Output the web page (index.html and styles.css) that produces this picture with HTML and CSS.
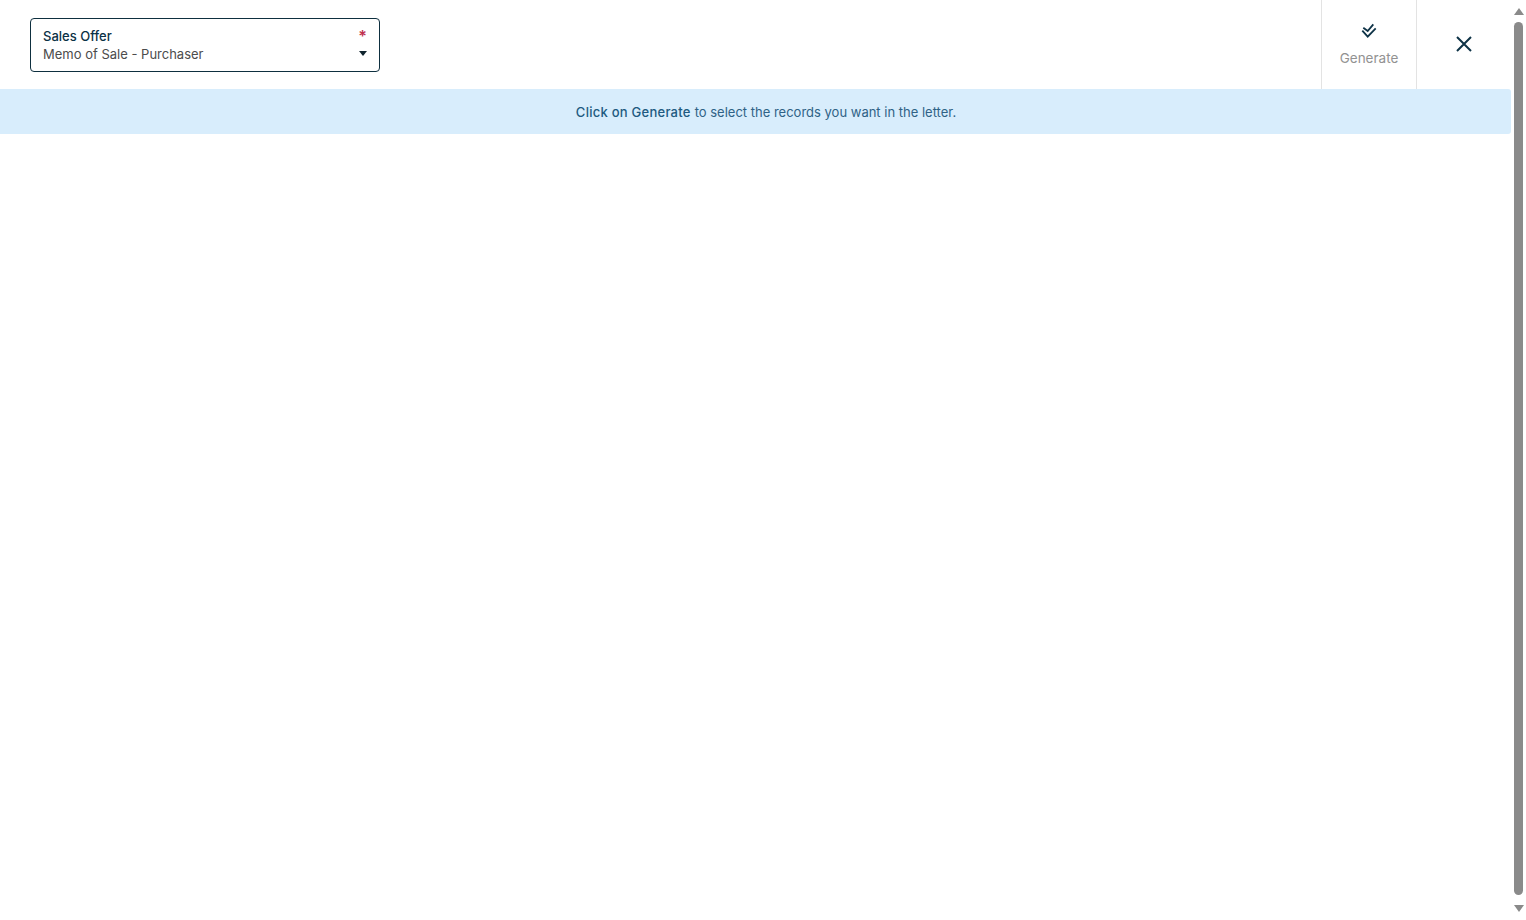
FILE: index.html
```html
<!DOCTYPE html>
<html lang="en">
<head>
<meta charset="utf-8">
<title>Sales Offer</title>
<link rel="stylesheet" href="styles.css">
</head>
<body>
<div class="app">
  <main class="main">
    <header class="toolbar">
      <div class="select">
        <div class="select-text">
          <div class="select-label">Sales Offer</div>
          <div class="select-value">Memo of Sale - Purchaser</div>
        </div>
        <div class="select-side">
          <span class="required">*</span>
          <svg class="caret" width="8" height="5" viewBox="0 0 8 5"><path d="M0 0h8L4 5z"/></svg>
        </div>
      </div>
      <div class="actions">
        <button class="action generate">
          <svg class="check-icon" width="16" height="16" viewBox="0 0 16 16"><path d="M2.3 4.7L6.7 8l5.6-6.7M1.3 7.7l5.4 6 8-8.4"/></svg>
          <span>Generate</span>
        </button>
        <button class="action close" aria-label="Close">
          <svg class="close-icon" width="16" height="16" viewBox="0 0 16 16"><path d="M1 1l14 14M15 1L1 15"/></svg>
        </button>
      </div>
    </header>
    <div class="notice"><strong>Click on Generate</strong> to select the records you want in the letter.</div>
  </main>
  <aside class="scrollbar">
    <span class="arrow up"></span>
    <span class="thumb"></span>
    <span class="arrow down"></span>
  </aside>
</div>
</body>
</html>
```
FILE: styles.css
```css
* { box-sizing: border-box; }
html, body { height: 100%; }
body { margin: 0; background: #fff; font-family: Inter, "Liberation Sans", sans-serif; overflow: hidden; }
.app { display: flex; height: 920px; }
.main { flex: 1; min-width: 0; }
.toolbar { height: 89px; display: flex; justify-content: space-between; align-items: flex-start; padding-left: 30px; }
.select { width: 350px; height: 54px; margin-top: 18px; border: 1px solid #0e2f3f; border-radius: 4px; display: flex; justify-content: space-between; padding: 8px 12px 0; }
.select-label { font-size: 13px; line-height: 18px; font-weight: 500; color: #0b3145; }
.select-value { font-size: 13px; line-height: 18px; color: #4c4c4c; }
.select-side { display: flex; flex-direction: column; align-items: center; }
.required { color: #c0314f; font-size: 16px; line-height: 18px; height: 19px; font-weight: 600; }
.caret { margin-top: 5px; fill: #10242e; }
.actions { display: flex; height: 89px; }
.action { background: none; border: 0; border-left: 1px solid #e3e3e3; padding: 0; font: inherit; display: flex; flex-direction: column; align-items: center; }
.generate { width: 95px; padding-top: 23px; color: #929292; font-size: 13.5px; line-height: 18px; gap: 10px; }
.close { width: 95px; padding-top: 36px; }
.check-icon { fill: none; stroke: #0e3347; stroke-width: 1.8; }
.close-icon { fill: none; stroke: #0e3347; stroke-width: 2; }
.notice { height: 45px; padding-left: 21px; background: #d8edfc; border-radius: 0 3px 3px 0; display: flex; align-items: center; justify-content: center; gap: 4px; font-size: 13px; color: #2f6286; }
.notice strong { font-weight: 500; letter-spacing: 0.25px; color: #205a80; }
.scrollbar { width: 15px; display: flex; flex-direction: column; align-items: center; padding: 8px 0; }
.thumb { flex: 1; width: 9px; margin: 7px 0 10px; background: #8a8a8a; border-radius: 5px; }
.arrow { width: 0; height: 0; border-left: 5px solid transparent; border-right: 5px solid transparent; }
.up { border-bottom: 7px solid #8a8a8a; }
.down { border-top: 7px solid #8a8a8a; }
```
